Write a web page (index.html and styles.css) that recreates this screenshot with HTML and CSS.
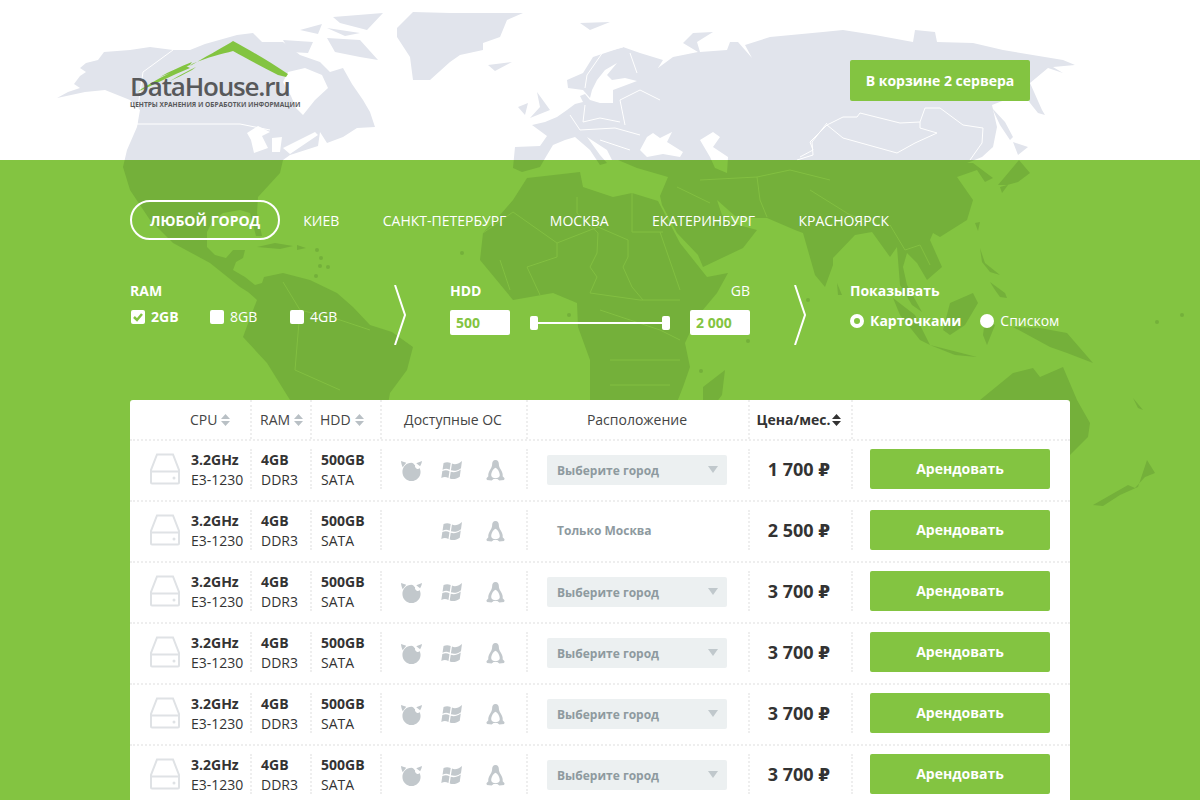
FILE: index.html
```html
<!DOCTYPE html>
<html lang="ru">
<head>
    <meta charset="UTF-8">
    <meta name="viewport" content="width=device-width, initial-scale=1.0">
    <title>DataHouse.ru</title>
    <link rel="stylesheet" href="styles.css">
</head>
<body>
    <!-- world map behind the page, drawn once and painted for white and green parts -->
    <svg class="world" viewBox="0 0 1200 800" aria-hidden="true">
        <defs>
            <clipPath id="clip-top"><rect width="1200" height="160"/></clipPath>
            <clipPath id="clip-bottom"><rect y="160" width="1200" height="640"/></clipPath>
            <g id="land" stroke="none">
                <path fill-rule="evenodd" d="M57 98L68 92 80 88 74 84 80 76 86 72 80 68 86 63 98 60 104 52 130 50 150 47 173 50 190 50 205 44 237 35 253 33 262 42 283 42 300 55 320 62 330 72 343 68 352 84 363 100 370 112 375 127 357 128 343 137 327 143 320 132 318 146 290 155 283 160 280 173 258 197 257 213 262 236 256 236 250 213 240 210 223 213 212 222 207 232 207 247 215 255 226 258 233 250 245 250 243 258 236 262 233 270 245 277 255 285 262 283 264 277 283 273 310 280 337 293 353 307 370 325 392 332 413 347 407 370 390 393 385 420 340 480 300 480 290 400 267 363 243 337 250 318 257 300 248 292 240 287 210 263 173 243 150 220 130 190 123 167 127 150 137 127 140 110 130 100 105 90 85 92ZM288 72L305 68 322 75 328 88 315 100 303 115 296 108 291 96 283 82ZM247 133L258 126 270 132 262 136 268 148 254 153 251 140ZM272 138L282 137 280 152 272 152ZM283 148L315 132 318 135 290 154Z"/>
                <path d="M283 40L313 42 308 53 290 52ZM333 17L383 13 367 30 340 23ZM327 28L360 33 345 36ZM327 38L360 40 378 60 360 57 335 52ZM300 30L322 24 318 34ZM397 28L413 12 450 13 523 13 507 20 500 37 483 43 483 50 460 55 450 62 430 80 413 80 410 57 397 37ZM488 65L512 62 495 71ZM580 23L610 22 590 30ZM537 92L550 110 530 118 540 107ZM518 107L528 103 525 115ZM257 247L275 243 293 246 280 249ZM297 245L306 248 297 250Z"/>
                <path fill-rule="evenodd" d="M513 168L515 147 540 146 547 136 532 125 545 122 557 117 567 110 575 104 583 102 580 96 585 94 590 100 600 103 613 103 613 90 637 81 625 78 612 80 607 75 617 63 605 70 597 80 592 90 590 98 583 90 568 88 567 80 583 73 593 57 623 47 640 53 663 60 658 68 673 57 698 52 683 43 693 33 713 32 697 42 700 52 727 50 730 42 738 42 752 58 745 45 770 37 823 32 843 30 875 35 913 42 915 30 935 32 937 42 973 43 1003 50 1063 60 1075 65 1053 67 1063 73 1048 68 1030 83 1042 110 1045 115 1038 113 1030 103 1025 95 1010 98 992 105 997 127 993 147 982 157 967 163 973 163 993 178 985 182 977 170 957 177 973 200 967 220 940 237 933 233 930 240 942 267 927 280 917 263 907 253 903 267 907 285 922 312 912 305 900 285 897 247 890 257 872 232 855 235 833 258 833 265 825 287 815 275 803 233 795 230 767 218 757 218 735 216 717 200 722 215 735 224 757 230 743 248 703 267 698 255 677 233 662 205 660 196 668 177 637 168 618 160 612 160 607 150 587 137 600 155 607 163 600 165 590 150 575 137 565 140 553 145 547 155 540 167 522 172ZM640 150L647 137 653 133 660 138 672 132 667 142 683 152 680 157 663 154 647 157ZM700 140L713 132 720 137 713 147 728 157 727 173 715 168 710 157Z"/>
                <path d="M513 200L527 178 545 176 580 172 583 187 613 197 632 193 658 201 680 243 707 277 728 273 717 293 697 317 685 343 690 367 683 387 670 420 640 480 610 480 590 400 590 360 578 327 577 303 553 293 513 300 480 260 483 233 500 215ZM725 370L722 395 703 420 703 387ZM837 283L842 295 838 295ZM992 108L1005 122 1013 137 1010 140 1000 125ZM1013 142L1028 147 1018 155ZM1019 160L1030 173 1018 182 1000 187 1002 193 1008 185 998 185ZM975 223L980 222 978 231ZM980 248L985 263 1000 275 990 272 982 262ZM990 282L1005 293 1007 298 1000 297 995 290ZM893 298L915 315 930 345 920 340 900 315ZM943 330L950 303 973 293 978 303 965 325 950 335ZM930 345L977 357 955 355ZM985 320L995 325 987 345 983 335ZM1013 327L1040 328 1067 333 1093 363 1067 353 1050 347ZM980 400L1013 373 1033 368 1040 377 1063 367 1077 400 1090 423 1088 437 1070 455 900 500ZM1093 505L1128 485 1135 488 1145 477 1155 473 1147 460 1138 487 1120 495 1103 506ZM1133 398L1143 410 1138 408Z"/>
                <circle cx="317" cy="250" r="2"/><circle cx="321" cy="258" r="2"/><circle cx="320" cy="266" r="2"/><circle cx="328" cy="267" r="2"/><circle cx="316" cy="276" r="2"/><circle cx="462" cy="253" r="2"/><circle cx="569" cy="315" r="2"/><circle cx="748" cy="341" r="2"/><circle cx="701" cy="371" r="2"/><circle cx="808" cy="300" r="2"/><circle cx="1157" cy="322" r="2"/><circle cx="1182" cy="315" r="2"/>
            </g>
            <path id="borders" fill="none" stroke-width="1" d="M173 50L143 72 138 107 137 124 240 124 270 130M623 47L603 52 587 75 585 88M630 53L637 73M800 157L813 150 810 142 827 125 843 117 857 117 860 113 900 123 920 122 925 108 940 108 963 125 983 128 982 143 970 160M827 125L843 138 897 153 915 143 937 133 920 128 920 122M827 123L812 142 813 155 797 160M660 100L640 90 620 100 625 125M585 105L583 122 600 118 620 122M570 115L580 130 615 128 640 135M600 140L630 150M632 193L632 232 663 232M628 240L628 257 623 267 632 287 643 300M577 197L577 213 598 233 597 253 590 267 597 277 590 293M557 243L557 257 527 267M513 212L557 243 598 227 628 240M483 233L513 212M677 187L710 203M757 177L760 200 767 217M700 180L757 177 790 170 830 180M810 190L850 215 880 225M890 225L905 250 920 245 930 265M600 310L660 330 680 340M610 360L680 360M610 385L670 385M527 267L540 295M500 260L510 290M590 293L640 300 680 300M660 232L680 290M283 282L300 310 340 320 370 330M300 310L295 370 340 390"/>
        </defs>
        <rect width="1200" height="160" fill="#fff"/>
        <rect y="160" width="1200" height="640" fill="#83c441"/>
        <g clip-path="url(#clip-top)" fill="#e1e4ec" stroke="#fff">
            <use href="#land"/>
            <use href="#borders"/>
        </g>
        <g clip-path="url(#clip-bottom)" fill="#74b03a" stroke="#82bf41">
            <use href="#land"/>
            <use href="#borders"/>
        </g>
        <!-- os icons -->
        <symbol id="i-bsd" viewBox="0 0 22 22">
            <path d="M11 3C5.5 3 1.5 7.5 1.5 12.5S5.500 22 11 22s9.500-4.500 9.500-9.500c0-1.500-.4-3-1-4.200-.5.800-1.700 1.300-3 .8-1.400-.5-2-1.800-1.800-3.500C13.500 4.500 12.500 3 11 3z"/>
            <path d="M0 1l5.500 2L1.800 7.500C.8 5.500.2 3.500 0 1zM22 1c-.3 2-1 4-2 5.500L16 3.500z"/>
        </symbol>
        <symbol id="i-win" viewBox="1.500 1 20.500 19.500">
            <path d="M4 3.500C6.500 2.300 8.500 2.300 11 3.500L10 10C7.500 8.800 5.500 8.800 3 10zM12.200 4C15 5.200 18 4.800 22 1.500L21 8.500C17.500 11 14.500 11.500 11.200 10.500zM2.800 11.300C5.200 10.200 7.400 10.200 9.800 11.400L8.800 18C6.300 16.800 4.300 16.800 1.800 18zM11 12C14 13 17 12.500 20.800 9.800L19.800 16.800C16.500 19.200 13.500 19.700 10 18.600z"/>
        </symbol>
        <symbol id="i-tux" viewBox="0 0 20 22">
            <path fill-rule="evenodd" d="M10 0C7.500 0 6.500 2 6.500 4 6.500 6.500 6 7.500 4.500 10 3 12.500 2 15 2.500 17L.5 19 1 21l5 .5L8 20h4l2 1.500 5-.5.5-2-2-2c.5-2-.5-4.500-2-7C14 7.500 13.500 6.500 13.500 4 13.500 2 12.500 0 10 0zM10 8C7.500 9 5.500 13 5.500 16c0 2 2.500 3 4.500 3s4.500-1 4.500-3c0-3-2-7-4.500-8z"/>
        </symbol>
        <symbol id="i-hdd" viewBox="0 0 30 32">
            <path fill="none" stroke="#dfe2e5" stroke-width="2" d="M7 1.500H23L29 17V29.500A1 1 0 0 1 28 30.500H2A1 1 0 0 1 1 29.500V17ZM1 18.500H29"/>
            <circle cx="24" cy="25" r="1.500" fill="#dfe2e5"/>
        </symbol>
        <symbol id="i-sort" viewBox="0 0 9 12">
            <path d="M4.500 0L9 5H0zM0 7H9L4.500 12z"/>
        </symbol>
    </svg>

    <header class="top">
        <a class="logo" href="#">
            <svg class="logo-roof" viewBox="0 0 160 54">
                <path fill="#83c441" d="M60 25C75 16 90 8 100 2L103 0C120 9 140 21 158 33L156 36 148 34C132 26 116 17 103 10 92 13 78 16 62 23ZM7 51C20 42 38 32 56 25L60 27C42 34 24 44 7 51ZM30 36C40 30 50 26 62 21L60 24C50 28 40 32 30 36ZM40 40C50 34 58 30 66 26L62 29C54 33 47 37 40 40Z"/>
            </svg>
            <span class="logo-name">DataHouse.ru</span>
            <span class="logo-sub">ЦЕНТРЫ ХРАНЕНИЯ И ОБРАБОТКИ ИНФОРМАЦИИ</span>
        </a>
        <a class="cart" href="#">В корзине 2 сервера</a>
    </header>

    <main class="content">
        <nav class="cities">
            <a class="city active" href="#">Любой город</a>
            <a class="city" href="#">Киев</a>
            <a class="city" href="#">Санкт-Петербург</a>
            <a class="city" href="#">Москва</a>
            <a class="city" href="#">Екатеринбург</a>
            <a class="city" href="#">Красноярск</a>
        </nav>

        <section class="filters">
            <div class="f-ram">
                <div class="f-title">RAM</div>
                <div class="checks">
                    <label class="check on"><span class="box"><svg viewBox="0 0 14 14"><path fill="none" stroke="#83c441" stroke-width="2.500" d="M3 7l3 3 5-6"/></svg></span>2GB</label>
                    <label class="check"><span class="box"></span>8GB</label>
                    <label class="check"><span class="box"></span>4GB</label>
                </div>
            </div>
            <svg class="arrow" viewBox="0 0 12 60"><path fill="none" stroke="#fff" stroke-width="2" d="M1 0L11 30 1 60"/></svg>
            <div class="f-hdd">
                <div class="f-head"><span class="f-title">HDD</span><span class="unit">GB</span></div>
                <div class="range">
                    <input class="num" type="text" value="500" readonly>
                    <div class="slider"><span class="knob"></span><span class="track"></span><span class="knob"></span></div>
                    <input class="num" type="text" value="2 000" readonly>
                </div>
            </div>
            <svg class="arrow" viewBox="0 0 12 60"><path fill="none" stroke="#fff" stroke-width="2" d="M1 0L11 30 1 60"/></svg>
            <div class="f-show">
                <div class="f-title">Показывать</div>
                <div class="radios">
                    <label class="radio on"><span class="dot"></span>Карточками</label>
                    <label class="radio"><span class="dot"></span>Списком</label>
                </div>
            </div>
        </section>

        <section class="servers">
            <div class="row head">
                <div class="cell c-cpu">CPU <svg class="sort"><use href="#i-sort"/></svg></div>
                <div class="cell c-txt">RAM <svg class="sort"><use href="#i-sort"/></svg></div>
                <div class="cell c-txt">HDD <svg class="sort"><use href="#i-sort"/></svg></div>
                <div class="cell center">Доступные ОС</div>
                <div class="cell center">Расположение</div>
                <div class="cell center sorted">Цена/мес. <svg class="sort"><use href="#i-sort"/></svg></div>
                <div class="cell"></div>
            </div>

            <div class="row">
                <div class="cell c-cpu"><svg class="hdd"><use href="#i-hdd"/></svg><div><b>3.2GHz</b><br>E3-1230</div></div>
                <div class="cell c-txt"><div><b>4GB</b><br>DDR3</div></div>
                <div class="cell c-txt"><div><b>500GB</b><br>SATA</div></div>
                <div class="cell os"><svg class="os-bsd"><use href="#i-bsd"/></svg><svg class="os-win"><use href="#i-win"/></svg><svg class="os-tux"><use href="#i-tux"/></svg></div>
                <div class="cell place"><div class="select">Выберите город</div></div>
                <div class="cell price"><span>1 700 <span class="rub">₽</span></span></div>
                <div class="cell action"><a class="rent" href="#">Арендовать</a></div>
            </div>
            <div class="row">
                <div class="cell c-cpu"><svg class="hdd"><use href="#i-hdd"/></svg><div><b>3.2GHz</b><br>E3-1230</div></div>
                <div class="cell c-txt"><div><b>4GB</b><br>DDR3</div></div>
                <div class="cell c-txt"><div><b>500GB</b><br>SATA</div></div>
                <div class="cell os"><span class="os-none"></span><svg class="os-win"><use href="#i-win"/></svg><svg class="os-tux"><use href="#i-tux"/></svg></div>
                <div class="cell place"><div class="only">Только Москва</div></div>
                <div class="cell price"><span>2 500 <span class="rub">₽</span></span></div>
                <div class="cell action"><a class="rent" href="#">Арендовать</a></div>
            </div>
            <div class="row">
                <div class="cell c-cpu"><svg class="hdd"><use href="#i-hdd"/></svg><div><b>3.2GHz</b><br>E3-1230</div></div>
                <div class="cell c-txt"><div><b>4GB</b><br>DDR3</div></div>
                <div class="cell c-txt"><div><b>500GB</b><br>SATA</div></div>
                <div class="cell os"><svg class="os-bsd"><use href="#i-bsd"/></svg><svg class="os-win"><use href="#i-win"/></svg><svg class="os-tux"><use href="#i-tux"/></svg></div>
                <div class="cell place"><div class="select">Выберите город</div></div>
                <div class="cell price"><span>3 700 <span class="rub">₽</span></span></div>
                <div class="cell action"><a class="rent" href="#">Арендовать</a></div>
            </div>
            <div class="row">
                <div class="cell c-cpu"><svg class="hdd"><use href="#i-hdd"/></svg><div><b>3.2GHz</b><br>E3-1230</div></div>
                <div class="cell c-txt"><div><b>4GB</b><br>DDR3</div></div>
                <div class="cell c-txt"><div><b>500GB</b><br>SATA</div></div>
                <div class="cell os"><svg class="os-bsd"><use href="#i-bsd"/></svg><svg class="os-win"><use href="#i-win"/></svg><svg class="os-tux"><use href="#i-tux"/></svg></div>
                <div class="cell place"><div class="select">Выберите город</div></div>
                <div class="cell price"><span>3 700 <span class="rub">₽</span></span></div>
                <div class="cell action"><a class="rent" href="#">Арендовать</a></div>
            </div>
            <div class="row">
                <div class="cell c-cpu"><svg class="hdd"><use href="#i-hdd"/></svg><div><b>3.2GHz</b><br>E3-1230</div></div>
                <div class="cell c-txt"><div><b>4GB</b><br>DDR3</div></div>
                <div class="cell c-txt"><div><b>500GB</b><br>SATA</div></div>
                <div class="cell os"><svg class="os-bsd"><use href="#i-bsd"/></svg><svg class="os-win"><use href="#i-win"/></svg><svg class="os-tux"><use href="#i-tux"/></svg></div>
                <div class="cell place"><div class="select">Выберите город</div></div>
                <div class="cell price"><span>3 700 <span class="rub">₽</span></span></div>
                <div class="cell action"><a class="rent" href="#">Арендовать</a></div>
            </div>
            <div class="row">
                <div class="cell c-cpu"><svg class="hdd"><use href="#i-hdd"/></svg><div><b>3.2GHz</b><br>E3-1230</div></div>
                <div class="cell c-txt"><div><b>4GB</b><br>DDR3</div></div>
                <div class="cell c-txt"><div><b>500GB</b><br>SATA</div></div>
                <div class="cell os"><svg class="os-bsd"><use href="#i-bsd"/></svg><svg class="os-win"><use href="#i-win"/></svg><svg class="os-tux"><use href="#i-tux"/></svg></div>
                <div class="cell place"><div class="select">Выберите город</div></div>
                <div class="cell price"><span>3 700 <span class="rub">₽</span></span></div>
                <div class="cell action"><a class="rent" href="#">Арендовать</a></div>
            </div>
        </section>
    </main>
</body>
</html>
```

FILE: styles.css
```css
* {
    box-sizing: border-box;
}
html, body {
    height: 800px;
    overflow: hidden;
}
body {
    margin: 0;
    position: relative;
    font-family: "Open Sans", Arial, sans-serif;
    font-size: 14px;
    line-height: 20px;
    color: #333;
}
a {
    color: inherit;
    text-decoration: none;
}
.world {
    position: absolute;
    top: 0;
    left: 0;
    width: 1200px;
    height: 800px;
}

/* header */
.top {
    position: relative;
    height: 160px;
    width: 940px;
    margin: 0 auto;
    padding-right: 40px;
    display: flex;
    justify-content: space-between;
    align-items: flex-start;
}
.logo {
    display: flex;
    flex-direction: column;
    width: 172px;
    margin-top: 41px;
    color: #58595b;
}
.logo-roof {
    width: 160px;
    height: 54px;
    margin-bottom: -22px;
}
.logo-name {
    font-size: 26px;
    font-weight: 600;
    line-height: 26px;
    letter-spacing: -1.2px;
}
.logo-sub {
    margin-top: 2px;
    font-size: 6.6px;
    font-weight: 700;
    line-height: 8px;
    white-space: nowrap;
}
.cart {
    width: 180px;
    height: 41px;
    margin-top: 60px;
    background: #83c441;
    border-radius: 2px;
    color: #fff;
    font-weight: 700;
    line-height: 41px;
    text-align: center;
}

/* green part */
.content {
    position: relative;
    width: 940px;
    margin: 0 auto;
    padding-top: 40px;
}
.cities {
    display: flex;
    align-items: center;
    height: 40px;
}
.city {
    padding: 1px 21.75px 0;
    color: #fff;
    text-transform: uppercase;
    line-height: 35px;
}
.city.active {
    padding: 1px 18px 0;
    margin-right: 1.25px;
    border: 2px solid #fff;
    border-radius: 20px;
    font-weight: 700;
}

.filters {
    display: flex;
    align-items: flex-start;
    height: 64px;
    margin-top: 41px;
    margin-bottom: 55px;
    color: #fff;
}
.f-title {
    font-weight: 700;
}
.f-ram {
    width: 264px;
    flex: none;
}
.checks {
    display: flex;
    margin-top: 6px;
}
.check {
    display: flex;
    align-items: center;
    width: 80px;
}
.check.on {
    font-weight: 700;
    width: 79px;
    margin-left: 1px;
}
.box {
    width: 14px;
    height: 14px;
    margin-right: 6px;
    background: #fff;
    border-radius: 2px;
}
.box svg {
    display: block;
}
.arrow {
    width: 12px;
    height: 60px;
    margin-top: 4px;
    margin-right: 44px;
    flex: none;
}
.f-hdd {
    width: 300px;
    margin-right: 44px;
    flex: none;
}
.f-show {
    flex: none;
}
.f-head {
    display: flex;
    justify-content: space-between;
}
.range {
    display: flex;
    align-items: center;
    margin-top: 9px;
}
.num {
    width: 60px;
    height: 25px;
    padding: 0 6px;
    border: 0;
    border-radius: 2px;
    background: #fff;
    color: #83c441;
    font: 700 14px "Open Sans", Arial, sans-serif;
}
.slider {
    display: flex;
    align-items: center;
    width: 140px;
    margin: 0 20px;
}
.knob {
    width: 8px;
    height: 14px;
    background: #fff;
    border-radius: 2px;
}
.track {
    flex: 1;
    height: 2px;
    background: #fff;
}
.radios {
    display: flex;
    margin-top: 10px;
}
.radio {
    display: flex;
    align-items: center;
    margin-right: 19px;
}
.radio.on {
    font-weight: 700;
}
.dot {
    width: 14px;
    height: 14px;
    margin-right: 6px;
    background: #fff;
    border-radius: 50%;
}
.radio.on .dot {
    background: #83c441;
    border: 4px solid #fff;
}

/* server list */
.servers {
    background: #fff;
    border-radius: 3px 3px 0 0;
}
.row {
    display: grid;
    grid-template-columns: 120px 60px 70px 146px 222px 103px 219px;
    height: 61px;
    padding-top: 8px;
    border-bottom: 2px dotted #eee;
}
.row.head {
    height: 41px;
    padding-top: 0;
    color: #444;
}
.cell {
    display: flex;
    align-items: center;
    height: 40px;
    border-left: 2px dotted #eee;
}
.head .cell {
    height: 39px;
}
.cell:first-child {
    border-left: 0;
}
.center {
    justify-content: center;
    padding-right: 2px;
}
.sorted {
    padding-right: 4px;
    font-weight: 700;
    color: #333;
}
.sort {
    width: 9px;
    height: 12px;
    margin-left: 4px;
    fill: #b9c0c5;
}
.sorted .sort {
    margin-left: 1px;
    fill: #333;
}
.c-cpu {
    padding-left: 60px;
}
.row:not(.head) .c-cpu {
    padding-left: 20px;
}
.c-txt {
    padding-left: 8px;
}
.row:not(.head) .c-txt {
    padding-left: 9px;
}
.row:not(.head) .cell > div {
    margin-top: 1px;
}
.hdd {
    width: 30px;
    height: 32px;
    margin-right: 11px;
    flex: none;
}
.os {
    padding-left: 19px;
    fill: #c2c8cc;
}
.os svg, .os-none {
    width: 21px;
    height: 21px;
    margin-top: 2px;
    margin-right: 20px;
    flex: none;
}
.os .os-win {
    margin-left: -1px;
}
.os .os-tux {
    margin-left: 3px;
}
.place {
    padding-left: 19px;
}
.row:not(.head) .place > div {
    margin-top: 2px;
}
.select {
    position: relative;
    width: 180px;
    height: 30px;
    padding-left: 10px;
    background: #ecf0f1;
    border-radius: 2px;
    color: #8e9a9f;
    font-size: 12px;
    font-weight: 700;
    line-height: 32px;
}
.select::after {
    content: "";
    position: absolute;
    top: 11px;
    right: 9px;
    border: 5px solid transparent;
    border-top: 7px solid #c0c8cc;
    border-bottom: 0;
}
.only {
    padding-left: 10px;
    color: #8e9a9f;
    font-size: 12px;
    font-weight: 700;
}
.price {
    justify-content: center;
    padding-top: 1px;
    padding-right: 3px;
    font-size: 18px;
    font-weight: 700;
    color: #333;
}
.rub {
    font-family: "DejaVu Sans", sans-serif;
    font-size: 17px;
}
.action {
    padding-left: 17px;
}
.rent {
    width: 180px;
    height: 40px;
    background: #83c441;
    border-radius: 2px;
    color: #fff;
    font-weight: 700;
    line-height: 40px;
    text-align: center;
}
```
